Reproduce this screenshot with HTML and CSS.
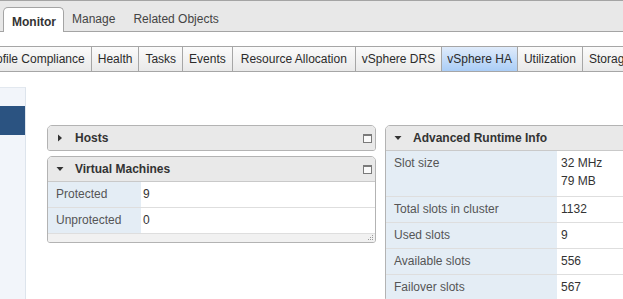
FILE: index.html
```html
<!DOCTYPE html>
<html>
<head>
<meta charset="utf-8">
<link rel="stylesheet" href="styles.css">
</head>
<body>
<div class="topbar">
  <div class="tab active">Monitor</div>
  <div class="tab">Manage</div>
  <div class="tab">Related Objects</div>
</div>
<div class="subtabs-wrap">
  <div class="subtabs">
    <div class="subtab">Profile Compliance</div>
    <div class="subtab">Health</div>
    <div class="subtab">Tasks</div>
    <div class="subtab">Events</div>
    <div class="subtab wide">Resource Allocation</div>
    <div class="subtab">vSphere DRS</div>
    <div class="subtab selected">vSphere HA</div>
    <div class="subtab">Utilization</div>
    <div class="subtab">Storage Reports</div>
  </div>
</div>
<div class="workspace">
  <aside class="sidebar"><div class="sel"></div></aside>
  <main class="main">
    <div class="col col-left">
      <section class="panel">
        <div class="phead">
          <svg class="tri" width="8" height="8" viewBox="0 0 8 8"><path d="M2 0.5 L6 4 L2 7.5 Z" fill="#333"/></svg>
          <span class="ptitle">Hosts</span>
          <span class="maxi"></span>
        </div>
      </section>
      <section class="panel">
        <div class="phead open">
          <svg class="tri" width="8" height="8" viewBox="0 0 8 8"><path d="M0.5 2 L7.5 2 L4 6 Z" fill="#333"/></svg>
          <span class="ptitle">Virtual Machines</span>
          <span class="maxi"></span>
        </div>
        <div class="row vm"><div class="lbl">Protected</div><div class="val">9</div></div>
        <div class="row vm"><div class="lbl">Unprotected</div><div class="val">0</div></div>
        <div class="pfoot">
          <svg class="grip" width="6" height="6" viewBox="0 0 6 6" fill="#9a9a9a">
            <rect x="4" y="0" width="1" height="1"/>
            <rect x="2" y="2" width="1" height="1"/><rect x="4" y="2" width="1" height="1"/>
            <rect x="0" y="4" width="1" height="1"/><rect x="2" y="4" width="1" height="1"/><rect x="4" y="4" width="1" height="1"/>
          </svg>
        </div>
      </section>
    </div>
    <div class="col col-right">
      <section class="panel">
        <div class="phead open">
          <svg class="tri" width="8" height="8" viewBox="0 0 8 8"><path d="M0.5 2 L7.5 2 L4 6 Z" fill="#333"/></svg>
          <span class="ptitle">Advanced Runtime Info</span>
        </div>
        <div class="row adv tall"><div class="lbl">Slot size</div><div class="val">32 MHz<br>79 MB</div></div>
        <div class="row adv"><div class="lbl">Total slots in cluster</div><div class="val">1132</div></div>
        <div class="row adv"><div class="lbl">Used slots</div><div class="val">9</div></div>
        <div class="row adv"><div class="lbl">Available slots</div><div class="val">556</div></div>
        <div class="row adv"><div class="lbl">Failover slots</div><div class="val">567</div></div>
      </section>
    </div>
  </main>
</div>
</body>
</html>
```
FILE: styles.css
```css
html, body {
  margin: 0;
  padding: 0;
}
body {
  width: 623px;
  height: 299px;
  overflow: hidden;
  background: #fff;
  font-family: "Liberation Sans", Arial, sans-serif;
  font-size: 12px;
  color: #333;
}
.topbar {
  height: 30px;
  border-top: 1px solid #a4a4a4;
  border-bottom: 1px solid #a4a4a4;
  background: #e8e8e8;
  display: flex;
  align-items: flex-end;
  padding-left: 3px;
}
.tab {
  height: 24px;
  line-height: 25px;
  padding: 0 8px 0 8px;
  color: #444;
  align-self: flex-start;
  margin-top: 6px;
}
.tab + .tab + .tab {
  padding-left: 10px;
}
.tab.active {
  align-self: flex-end;
  margin-top: 0;
  margin-bottom: -1px;
  height: 24px;
  line-height: 29px;
  padding: 0 7px 0 8px;
  font-weight: bold;
  color: #333;
  background: #fff;
  border: 1px solid #a4a4a4;
  border-bottom: none;
  border-radius: 5px 5px 0 0;
}
.subtabs-wrap {
  margin-top: 14px;
  overflow: hidden;
  width: 623px;
}
.subtabs {
  display: flex;
  margin-left: -23px;
  width: max-content;
  border-top: 1px solid #a6a6a6;
  border-bottom: 1px solid #a6a6a6;
}
.subtab {
  height: 24px;
  line-height: 24px;
  padding: 0 6px;
  border-left: 1px solid #a6a6a6;
  background: linear-gradient(#fbfbfb, #e9e9e9);
  color: #2b2b2b;
  white-space: nowrap;
}
.subtab.wide {
  padding: 0 8px;
}
.subtab.selected {
  padding: 0 5px;
  background: linear-gradient(#dfebfb, #aacdf6);
}
.workspace {
  display: flex;
  height: 227px;
}
.sidebar {
  width: 25px;
  flex: none;
  margin-top: 15px;
  background: #f2f5fa;
  border-top: 1px solid #e2e8ef;
  border-right: 1px solid #dde4ec;
}
.sel {
  margin-top: 18px;
  height: 29px;
  background: #2b5381;
}
.main {
  display: flex;
  gap: 9px;
  padding: 53px 0 0 21px;
  align-items: flex-start;
}
.col-left {
  width: 329px;
  flex: none;
}
.col-right {
  width: 300px;
  flex: none;
}
.panel {
  border: 1px solid #b3b3b3;
  border-radius: 5px 5px 3px 3px;
  background: #fff;
  margin-bottom: 5px;
  overflow: hidden;
}
.phead {
  height: 24px;
  background: #e9e9e9;
  display: flex;
  align-items: center;
}
.phead.open {
  border-bottom: 1px solid #c9c9c9;
}
.tri {
  margin-left: 8px;
  flex: none;
}
.ptitle {
  margin-left: 11px;
  font-weight: bold;
  color: #333;
}
.maxi {
  margin-left: auto;
  margin-right: 3px;
  width: 7px;
  height: 6px;
  border: 1px solid #7a7a7a;
  border-top-width: 2px;
  background: #fafafa;
}
.row {
  display: flex;
  border-bottom: 1px solid #dedede;
  line-height: 18px;
}
.lbl {
  padding: 3px 8px 4px;
  background: #e4edf5;
  color: #555;
  flex: none;
}
.val {
  padding: 3px 4px 4px;
  color: #333;
}
.vm .lbl {
  width: 77px;
}
.vm .val {
  padding-left: 2px;
}
.adv .lbl {
  width: 155px;
}
.adv.tall .lbl,
.adv.tall .val {
  padding-bottom: 6px;
}
.row:last-child {
  border-bottom: none;
}
.pfoot {
  height: 8px;
  background: #f1f1f1;
  display: flex;
  justify-content: flex-end;
  align-items: flex-end;
}
.grip {
  margin: 0 1px 1px 0;
}
```
